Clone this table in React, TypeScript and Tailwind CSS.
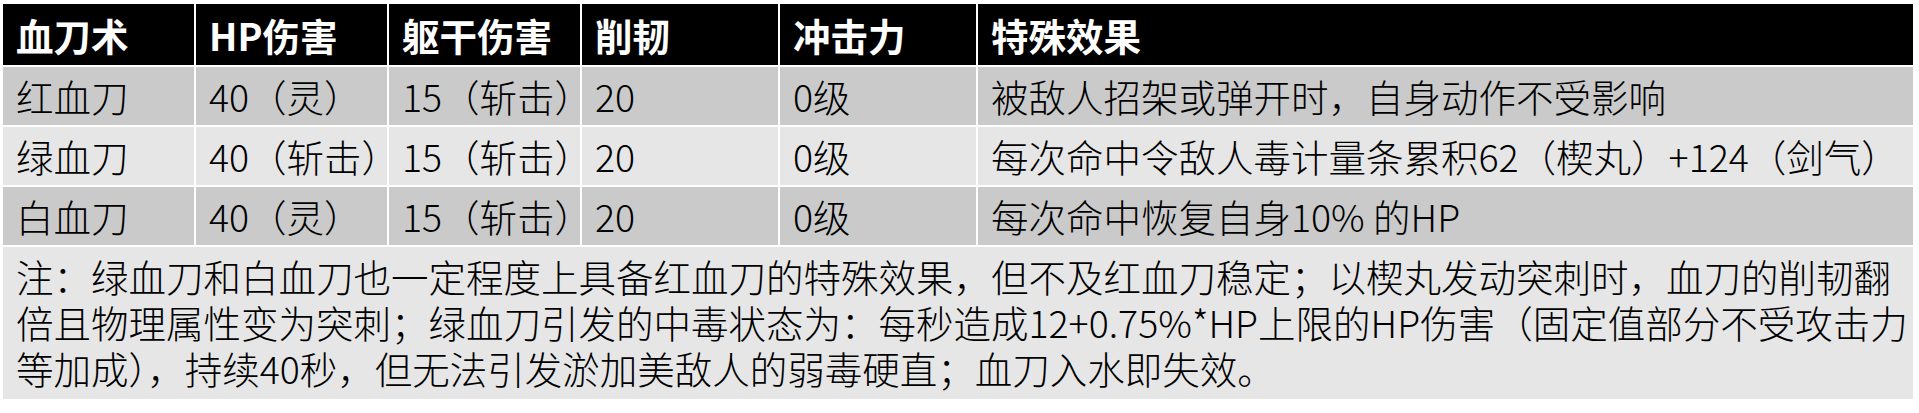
import React from "react";

interface Row {
    name: string;
    hp: string;
    posture: string;
    cut: string;
    impact: string;
    effect: string;
}

const rows: Row[] = [
    {
        name: "红血刀",
        hp: "40（灵）",
        posture: "15（斩击）",
        cut: "20",
        impact: "0级",
        effect: "被敌人招架或弹开时，自身动作不受影响",
    },
    {
        name: "绿血刀",
        hp: "40（斩击）",
        posture: "15（斩击）",
        cut: "20",
        impact: "0级",
        effect: "每次命中令敌人毒计量条累积62（楔丸）+124（剑气）",
    },
    {
        name: "白血刀",
        hp: "40（灵）",
        posture: "15（斩击）",
        cut: "20",
        impact: "0级",
        effect: "每次命中恢复自身10% 的HP",
    },
];

const headers = ["血刀术", "HP伤害", "躯干伤害", "削韧", "冲击力", "特殊效果"];

const App: React.FC = () => {
    return (
        <div
            className="w-[1919px] h-[413px] bg-white pl-[1px] pt-[2px] overflow-hidden"
            style={{ fontFamily: '"Noto Sans CJK SC", "Noto Sans", sans-serif' }}
        >
            <table className="border-separate border-spacing-[2px] table-fixed w-[1914px] text-[37.5px] leading-none text-black font-light">
                <colgroup>
                    <col className="w-[191px]" />
                    <col className="w-[191px]" />
                    <col className="w-[191px]" />
                    <col className="w-[196px]" />
                    <col className="w-[196px]" />
                    <col />
                </colgroup>
                <thead>
                    <tr className="h-[61px]">
                        {headers.map((h) => (
                            <th
                                key={h}
                                className="bg-black text-white font-bold text-left px-[13px] whitespace-nowrap"
                            >
                                {h}
                            </th>
                        ))}
                    </tr>
                </thead>
                <tbody>
                    {rows.map((r, i) => (
                        <tr
                            key={r.name}
                            className={`h-[58px] ${i % 2 === 0 ? "bg-[#cacaca]" : "bg-[#e6e6e6]"}`}
                        >
                            <td className="px-[13px] whitespace-nowrap">{r.name}</td>
                            <td className="px-[13px] whitespace-nowrap">{r.hp}</td>
                            <td className="px-[13px] whitespace-nowrap">{r.posture}</td>
                            <td className="px-[13px] whitespace-nowrap">{r.cut}</td>
                            <td className="px-[13px] whitespace-nowrap">{r.impact}</td>
                            <td className="px-[13px] whitespace-nowrap">{r.effect}</td>
                        </tr>
                    ))}
                    <tr className="bg-[#e6e6e6]">
                        <td colSpan={6} className="px-[13px] pt-[6px] pb-[8px] leading-[46px] whitespace-nowrap">
                            <div>注：绿血刀和白血刀也一定程度上具备红血刀的特殊效果，但不及红血刀稳定；以楔丸发动突刺时，血刀的削韧翻</div>
                            <div>倍且物理属性变为突刺；绿血刀引发的中毒状态为：每秒造成12+0.75%*HP上限的HP伤害（固定值部分不受攻击力</div>
                            <div>等加成），持续40秒，但无法引发淤加美敌人的弱毒硬直；血刀入水即失效。</div>
                        </td>
                    </tr>
                </tbody>
            </table>
        </div>
    );
};

export default App;
